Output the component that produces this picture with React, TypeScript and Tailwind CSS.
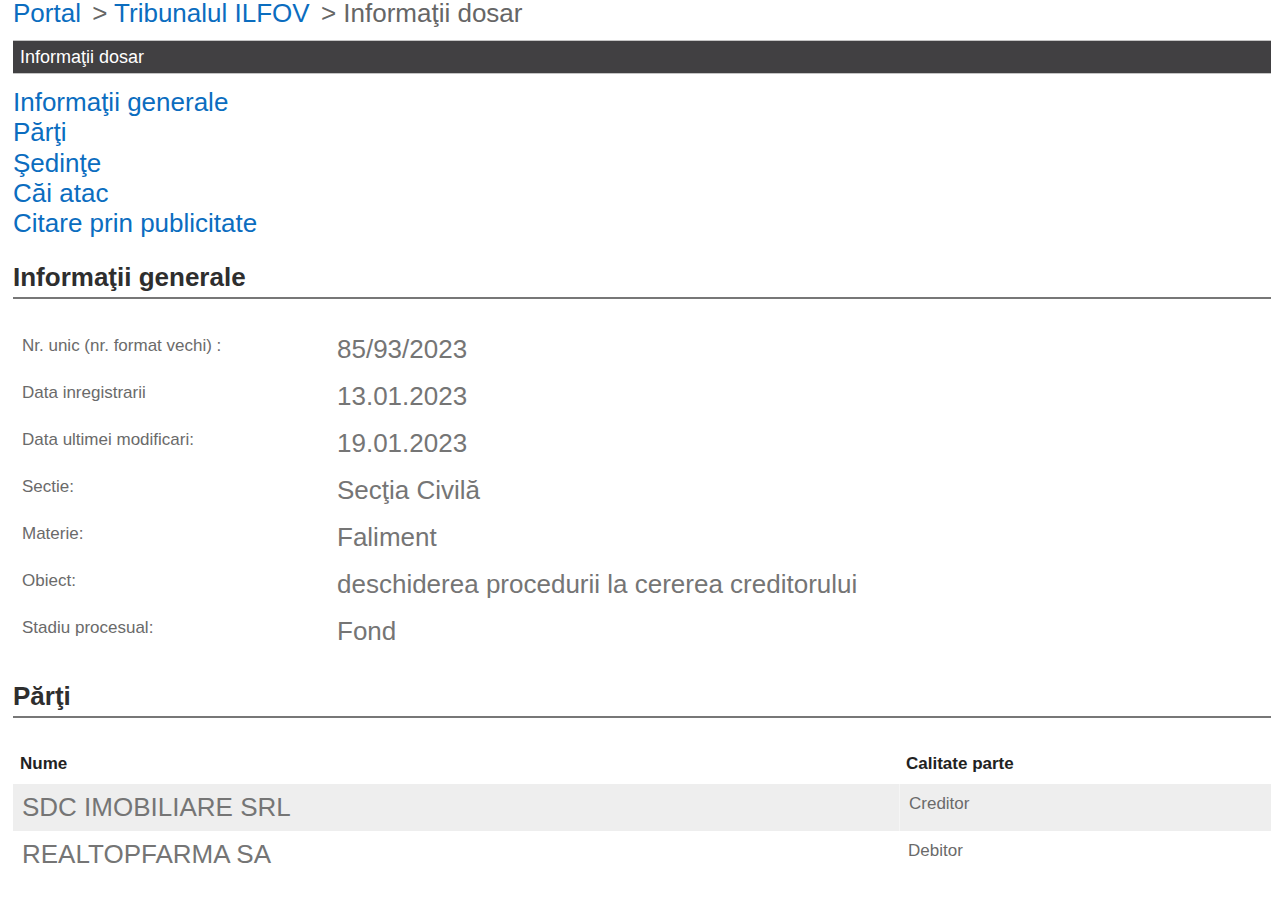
const font = { fontFamily: '"Liberation Sans", Arial, Helvetica, sans-serif' };

const links = ["Informaţii generale", "Părţi", "Şedinţe", "Căi atac", "Citare prin publicitate"];

const info: [string, string][] = [
  ["Nr. unic (nr. format vechi) :", "85/93/2023"],
  ["Data inregistrarii", "13.01.2023"],
  ["Data ultimei modificari:", "19.01.2023"],
  ["Sectie:", "Secţia Civilă"],
  ["Materie:", "Faliment"],
  ["Obiect:", "deschiderea procedurii la cererea creditorului"],
  ["Stadiu procesual:", "Fond"],
];

const parti: [string, string][] = [
  ["SDC IMOBILIARE SRL", "Creditor"],
  ["REALTOPFARMA SA", "Debitor"],
];

function SectionTitle({ children }: { children: React.ReactNode }) {
  return (
    <h2 className="text-[26px] leading-[26px] font-bold text-[#2e2e2e] pb-[7px] border-b-2 border-[#777777]">
      {children}
    </h2>
  );
}

export default function App() {
  return (
    <div style={font} className="bg-white min-h-[900px] px-[13px] antialiased">
      {/* breadcrumb */}
      <div className="text-[26px] leading-[26px] whitespace-nowrap">
        <a href="#" className="text-[#0b6dbf]">Portal</a>
        <span className="ml-[4px] text-[#666666]"> &gt; </span>
        <a href="#" className="text-[#0b6dbf]">Tribunalul ILFOV</a>
        <span className="ml-[4px] text-[#666666]"> &gt; Informaţii dosar</span>
      </div>

      {/* title bar */}
      <div className="mt-[14px] h-[34px] flex items-center bg-[#414042] border-y border-[#c4c4c4] pl-[7px] text-white text-[18px] leading-[18px]">
        Informaţii dosar
      </div>

      {/* anchors */}
      <ul className="mt-[13px] text-[26px] leading-[30.25px]">
        {links.map((l) => (
          <li key={l}>
            <a href="#" className="text-[#0b6dbf]">{l}</a>
          </li>
        ))}
      </ul>

      {/* Informatii generale */}
      <div className="mt-[26px]">
        <SectionTitle>Informaţii generale</SectionTitle>
        <div className="pt-[34px]">
          {info.map(([k, v]) => (
            <div key={k} className="flex h-[47px]">
              <div className="w-[315px] pl-[9px] pt-[4px] text-[17px] leading-[17px] text-[#6a6a6a]">{k}</div>
              <div className="pl-[9px] pt-[3px] text-[26px] leading-[26px] text-[#757575]">{v}</div>
            </div>
          ))}
        </div>
      </div>

      {/* Parti */}
      <div className="mt-[21px]">
        <SectionTitle>Părţi</SectionTitle>
        <div className="flex pt-[37px] pb-[12px] text-[17px] leading-[17px] font-bold text-[#222222]">
          <div className="w-[886px] pl-[7px]">Nume</div>
          <div className="flex-1 pl-[7px]">Calitate parte</div>
        </div>
        {parti.map(([n, c], i) => (
          <div key={n} className={`flex h-[47px] ${i === 0 ? "bg-[#eeeeee]" : ""}`}>
            <div className="w-[886px] pl-[9px] pt-[10px] text-[26px] leading-[26px] text-[#757575]">{n}</div>
            <div className={`flex-1 pl-[9px] pt-[11px] text-[17px] leading-[17px] text-[#6a6a6a] ${i === 0 ? "border-l border-[#f5f5f5]" : ""}`}>
              {c}
            </div>
          </div>
        ))}
      </div>
    </div>
  );
}
